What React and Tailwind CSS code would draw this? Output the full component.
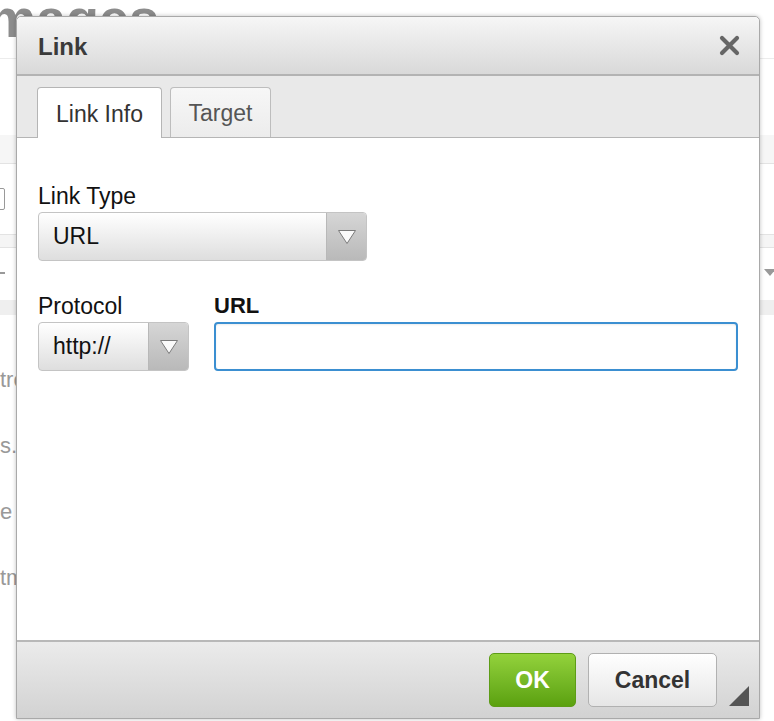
import React from "react";

function SelectArrow() {
  return (
    <svg width="20" height="16" viewBox="0 0 20 16">
      <polygon points="1.5,1.5 18.5,1.5 10,14.5" fill="#fafafa" stroke="#7a7a7a" strokeWidth="1" />
    </svg>
  );
}

function FakeSelect({ value, width }) {
  return (
    <div
      className={`${width} h-[49px] flex rounded-[4px] border border-[#c4c4c4] bg-gradient-to-b from-white to-[#dedede] overflow-hidden`}
    >
      <div className="flex-1 flex items-center pl-[14px] text-[23px] text-[#111]">{value}</div>
      <div className="w-[40px] flex items-center justify-center border-l border-[#b8b8b8] bg-gradient-to-b from-[#d6d6d6] to-[#b9b9b9]">
        <SelectArrow />
      </div>
    </div>
  );
}

export default function App() {
  return (
    <div className="relative h-[721px] w-[774px] overflow-hidden bg-white font-['Liberation_Sans',Arial,sans-serif]">
      {/* page behind the dialog */}
      <div className="h-[59px] border-b border-[#ececec] overflow-hidden">
        <div className="-ml-[12px] -mt-[9px] text-[54px] font-bold leading-none text-[#8c8c8c]">mages</div>
      </div>
      <div className="h-[76px]" />
      <div className="h-[29px] bg-[#f6f6f6] border-b border-[#e3e3e3]" />
      <div className="h-[71px] border-b border-[#e3e3e3] flex items-center">
        <div className="-ml-[8px] w-[13px] h-[22px] border border-[#999] rounded-[2px]" />
      </div>
      <div className="h-[13px] bg-[#f5f5f5] border-b border-[#e3e3e3]" />
      <div className="h-[52px] flex items-center justify-between pb-[2px]">
        <div className="w-[5px] h-[2px] bg-[#999]" />
        <svg width="12" height="8" viewBox="0 0 12 8" className="mr-[-2px]">
          <polygon points="0,0 12,0 6,7" fill="#999" />
        </svg>
      </div>
      <div className="h-[15px] bg-[#efefef]" />
      <div className="mt-[32px] text-[22px] leading-[66px] text-[#999]">
        <div>troduction</div>
        <div>s...</div>
        <div>e more</div>
        <div>tml</div>
      </div>

      {/* Link dialog */}
      <div className="absolute left-[16px] top-[16px] w-[744px] h-[703px] flex flex-col border border-[#a9a9a9] rounded-t-[5px] bg-white shadow-[0_0_4px_rgba(0,0,0,0.25)]">
        <div className="h-[59px] shrink-0 flex items-center justify-between pl-[21px] pr-[19px] rounded-t-[5px] bg-gradient-to-b from-[#f6f6f6] to-[#d9d9d9] border-b-2 border-[#b3b3b3]">
          <span className="text-[24px] font-bold text-[#3a3a3a] pt-[2px]">Link</span>
          <svg width="21" height="21" viewBox="0 0 21 21">
            <path d="M3 3 L18 18 M18 3 L3 18" stroke="#666" strokeWidth="4.2" strokeLinecap="round" />
          </svg>
        </div>

        <div className="h-[62px] shrink-0 flex items-end gap-[8px] pl-[20px] bg-[#e9e9e9] border-b border-[#b5b5b5]">
          <div className="relative -mb-px w-[125px] h-[51px] flex items-center justify-center rounded-t-[4px] border border-b-0 border-[#b5b5b5] bg-white text-[23px] text-[#333] pt-[2px]">
            Link Info
          </div>
          <div className="w-[101px] h-[50px] flex items-center justify-center rounded-t-[4px] border border-b-0 border-[#bdbdbd] bg-gradient-to-b from-[#f7f7f7] to-[#ececec] text-[23px] text-[#555] pt-[2px]">
            Target
          </div>
        </div>

        <div className="flex-1 pt-[45px] pl-[21px] pr-[21px]">
          <div className="text-[23px] leading-[26px] text-[#111] mb-[3px]">Link Type</div>
          <FakeSelect value="URL" width="w-[329px]" />
          <div className="flex gap-[25px] mt-[32px]">
            <div>
              <div className="text-[23px] leading-[26px] text-[#111] mb-[3px]">Protocol</div>
              <FakeSelect value="http://" width="w-[151px]" />
            </div>
            <div className="flex-1">
              <div className="text-[22px] leading-[26px] font-bold text-[#111] mb-[3px]">URL</div>
              <div className="h-[49px] rounded-[4px] border-2 border-[#3b8fd1] bg-white shadow-[inset_0_1px_2px_rgba(0,0,0,0.08)]" />
            </div>
          </div>
        </div>

        <div className="h-[78px] shrink-0 flex items-start justify-end pt-[11px] pr-[10px] border-t-2 border-[#b8b8b8] bg-gradient-to-b from-[#ebebeb] to-[#d2d2d2]">
          <div className="w-[87px] h-[54px] flex items-center justify-center rounded-[5px] border border-[#5d9c17] bg-gradient-to-b from-[#93d23b] to-[#5ba10e] text-[23px] font-bold text-white">
            OK
          </div>
          <div className="ml-[12px] w-[129px] h-[54px] flex items-center justify-center rounded-[5px] border border-[#b1b1b1] bg-gradient-to-b from-white to-[#e6e6e6] text-[23px] font-bold text-[#333]">
            Cancel
          </div>
          <svg width="20" height="20" viewBox="0 0 20 20" className="ml-[12px] mt-[33px]">
            <polygon points="20,0 20,20 0,20" fill="#555" />
          </svg>
        </div>
      </div>
    </div>
  );
}
